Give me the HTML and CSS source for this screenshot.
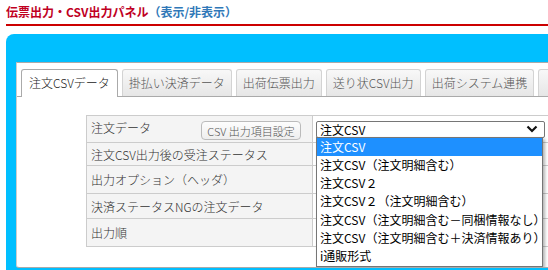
FILE: index.html
```html
<!DOCTYPE html>
<html lang="ja">
<head>
    <meta charset="UTF-8">
    <title>伝票出力・CSV出力パネル</title>
    <link rel="stylesheet" href="styles.css">
</head>
<body>
    <div class="page">
        <h2 class="title">伝票出力・CSV出力パネル<a href="#" class="toggle">（表示/非表示）</a></h2>
        <div class="panel">
            <div class="panel-body">
                <ul class="tabs">
                    <li class="tab active">注文CSVデータ</li>
                    <li class="tab">掛払い決済データ</li>
                    <li class="tab">出荷伝票出力</li>
                    <li class="tab">送り状CSV出力</li>
                    <li class="tab">出荷システム連携</li>
                    <li class="tab tab-more"></li>
                </ul>
                <table class="settings">
                    <colgroup>
                        <col class="col-label">
                        <col class="col-value">
                    </colgroup>
                    <tr class="row-1">
                        <th>
                            注文データ
                            <button class="btn">CSV 出力項目設定</button>
                        </th>
                        <td>
                            <div class="select-wrap">
                                <div class="select">
                                    <span>注文CSV</span>
                                    <svg width="12" height="8" viewBox="0 0 12 8"><path d="M1.5 1.5 L6 6 L10.5 1.5" fill="none" stroke="#111" stroke-width="2.2"/></svg>
                                </div>
                                <ul class="options">
                                    <li class="selected">注文CSV</li>
                                    <li>注文CSV（注文明細含む）</li>
                                    <li>注文CSV２</li>
                                    <li>注文CSV２（注文明細含む）</li>
                                    <li>注文CSV（注文明細含む－同梱情報なし）</li>
                                    <li>注文CSV（注文明細含む＋決済情報あり）</li>
                                    <li>i通販形式</li>
                                </ul>
                            </div>
                        </td>
                    </tr>
                    <tr class="row-2">
                        <th>注文CSV出力後の受注ステータス</th>
                        <td></td>
                    </tr>
                    <tr class="row-3">
                        <th>出力オプション（ヘッダ）</th>
                        <td></td>
                    </tr>
                    <tr class="row-4">
                        <th>決済ステータスNGの注文データ</th>
                        <td></td>
                    </tr>
                    <tr class="row-5">
                        <th>出力順</th>
                        <td></td>
                    </tr>
                </table>
            </div>
        </div>
    </div>
</body>
</html>
```

FILE: styles.css
```css
body {
    margin: 0;
    font-family: "Noto Sans CJK JP", "Noto Sans", sans-serif;
    font-size: 12px;
    color: #333;
    background: #fff;
    overflow: hidden;
}
.page {
    padding: 4px 0 0 6px;
}
.title {
    margin: 0;
    height: 20px;
    font-size: 12px;
    line-height: 16px;
    font-weight: bold;
    color: #c0001f;
    border-bottom: 2px solid #cc0000;
}
.toggle {
    color: #2f78b8;
    text-decoration: none;
}
.panel {
    margin-top: 8px;
    height: 208px;
    background: #00bfff;
    border-top-left-radius: 8px;
    padding: 28px 0 0 10px;
    overflow: hidden;
}
.panel-body {
    height: 204px;
    background: #fff;
    border-top: 1px solid #aaa;
    border-left: 1px solid #ccc;
    border-bottom: 1px solid #aaa;
    border-bottom-left-radius: 3px;
    overflow: hidden;
}
.tabs {
    display: flex;
    gap: 4px;
    margin: 0;
    padding: 6px 0 0 4px;
    list-style: none;
    border-bottom: 1px solid #aaa;
    white-space: nowrap;
}
.tab {
    flex: none;
    height: 26px;
    line-height: 26px;
    padding: 0 6px;
    color: #555;
    font-weight: 300;
    background: linear-gradient(#f8f8f8, #e6e6e6);
    border: 1px solid #d3d3d3;
    border-bottom: none;
    border-radius: 3px 3px 0 0;
}
.tab.active {
    padding: 0 7px;
    color: #222;
    background: #fff;
    border-color: #aaa;
    margin-bottom: -1px;
    height: 27px;
}
.tab-more {
    width: 60px;
}
.settings {
    margin: 18px 0 0 69px;
    width: 526px;
    table-layout: fixed;
    border-collapse: collapse;
}
.col-label {
    width: 226px;
}
.col-value {
    width: 300px;
}
.settings th,
.settings td {
    border: 1px solid #ccc;
    padding: 0;
}
.settings th {
    padding: 0 4px;
    text-align: left;
    font-weight: 300;
    white-space: nowrap;
    background: #f4f4f4;
    vertical-align: middle;
}
.settings td {
    background: #fff;
}
.row-1 { height: 27px; }
.row-1 th { vertical-align: top; padding-top: 3px; }
.row-2 { height: 23px; }
.row-3 { height: 28px; }
.row-4 { height: 25px; }
.row-5 { height: 28px; }
.btn {
    float: right;
    margin: 2px 7px 0 0;
    width: 100px;
    height: 19px;
    padding: 0;
    font-family: inherit;
    font-size: 11px;
    font-weight: 300;
    color: #555;
    background: linear-gradient(#fdfdfd, #eee);
    border: 1px solid #bbb;
    border-radius: 4px;
}
.select-wrap {
    position: relative;
    margin-left: 3px;
}
.select {
    display: flex;
    align-items: center;
    justify-content: space-between;
    width: 218px;
    height: 15px;
    padding: 0 6px 0 3px;
    color: #000;
    border: 1px solid #767676;
    border-radius: 2px;
    background: #fff;
}
.options {
    position: absolute;
    top: 16px;
    left: 0;
    width: 225px;
    margin: 0;
    padding: 0;
    list-style: none;
    color: #000;
    background: #fff;
    border: 1px solid #767676;
    box-shadow: 2px 2px 3px rgba(0, 0, 0, 0.3);
}
.options li {
    height: 18.3px;
    line-height: 18px;
    padding-left: 3px;
    white-space: nowrap;
}
.options li.selected {
    color: #fff;
    background: #1e90ff;
}
```
